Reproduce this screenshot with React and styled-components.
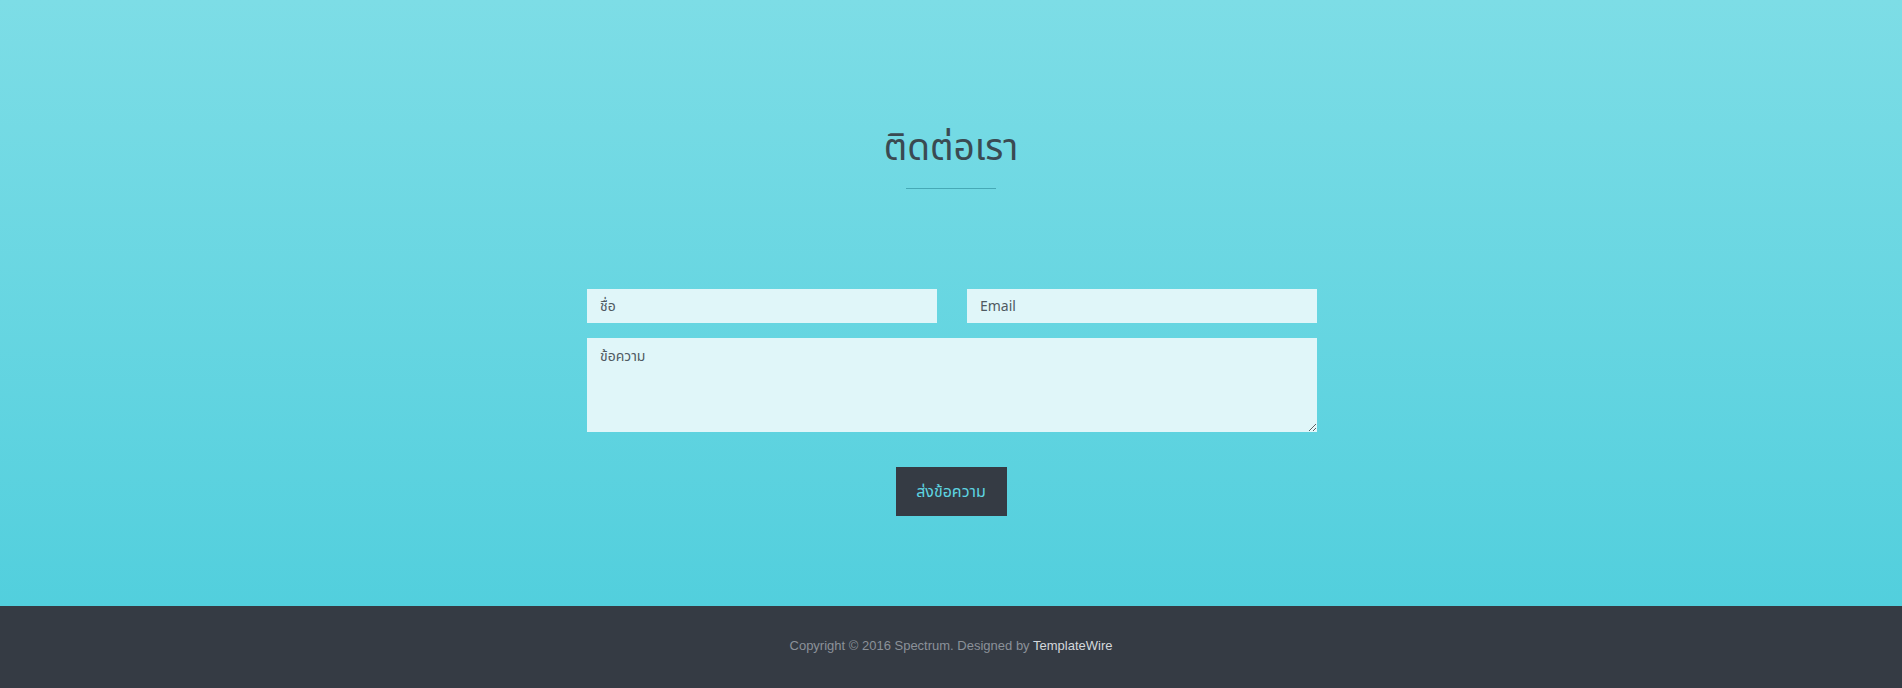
import React from "react";
import styled, { createGlobalStyle } from "styled-components";

const GlobalStyle = createGlobalStyle`
  * { box-sizing: border-box; }
  body {
    margin: 0;
    font-family: "Noto Sans Thai", "Noto Sans", "DejaVu Sans", sans-serif;
  }
`;

const ContactSection = styled.section`
  height: 606px;
  padding-top: 125px;
  background: linear-gradient(180deg, #7ddde6 0%, #52cfdd 100%);
  display: flex;
  flex-direction: column;
  align-items: center;
`;

const Title = styled.h2`
  margin: 0;
  font-size: 37px;
  font-weight: 400;
  line-height: 48px;
  color: #3a4a52;
`;

const Divider = styled.span`
  display: block;
  width: 90px;
  height: 1px;
  margin-top: 15px;
  background: #46a9b6;
`;

const Form = styled.form`
  width: 730px;
  margin-top: 100px;
  margin-left: 2px;
  display: flex;
  flex-direction: column;
  align-items: center;
`;

const Row = styled.div`
  width: 100%;
  display: grid;
  grid-template-columns: 1fr 1fr;
  gap: 30px;
`;

const Field = styled.input`
  height: 34px;
  padding: 0 13px;
  border: none;
  outline: none;
  background: #e0f6f9;
  font-family: "Noto Sans Thai", Roboto, "Noto Sans", sans-serif;
  font-size: 14px;
  color: #3f4a52;
  &::placeholder { color: #4f5a62; }
`;

const Message = styled.textarea`
  width: 100%;
  height: 94px;
  margin-top: 15px;
  padding: 8px 13px;
  border: none;
  outline: none;
  display: block;
  background: #e0f6f9;
  font-family: "Noto Sans Thai", Roboto, "Noto Sans", sans-serif;
  font-size: 14px;
  color: #3f4a52;
  &::placeholder { color: #4f5a62; }
`;

const SendButton = styled.button`
  margin: 35px 2px 0 0;
  width: 111px;
  height: 49px;
  border: none;
  background: #353b44;
  color: #5ed4e0;
  font-family: "Noto Sans Thai", "Noto Sans", sans-serif;
  font-size: 16px;
  cursor: pointer;
`;

const Footer = styled.footer`
  height: 82px;
  padding-bottom: 4px;
  background: #353b44;
  display: flex;
  align-items: center;
  justify-content: center;
`;

const Copy = styled.p`
  margin: 0;
  font-family: "Liberation Sans", Arial, sans-serif;
  font-size: 13px;
  color: #8b9199;
  a {
    color: #d4d8dc;
    text-decoration: none;
  }
`;

export default function App() {
  return (
    <>
      <GlobalStyle />
      <ContactSection>
        <Title>ติดต่อเรา</Title>
        <Divider />
        <Form onSubmit={(e) => e.preventDefault()}>
          <Row>
            <Field type="text" placeholder="ชื่อ" />
            <Field type="email" placeholder="Email" />
          </Row>
          <Message placeholder="ข้อความ" />
          <SendButton type="submit">ส่งข้อความ</SendButton>
        </Form>
      </ContactSection>
      <Footer>
        <Copy>
          Copyright © 2016 Spectrum. Designed by <a href="#">TemplateWire</a>
        </Copy>
      </Footer>
    </>
  );
}
